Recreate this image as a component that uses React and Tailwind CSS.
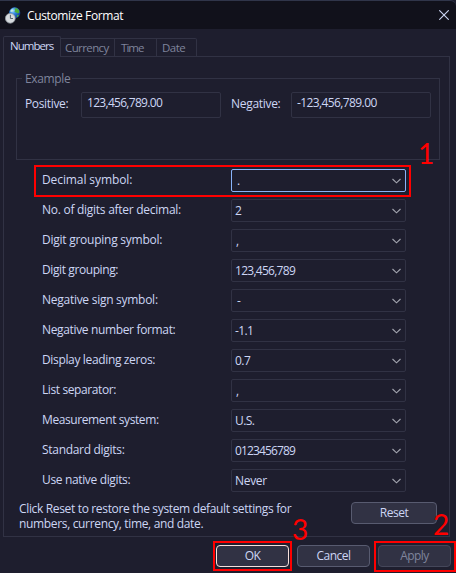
import React from 'react';

const rows = [
  ['Decimal symbol:', '.', 'pl-[5px]', 'tracking-[-0.1px]'],
  ['No. of digits after decimal:', '2', 'pl-[3px]', 'tracking-[-0.27px]'],
  ['Digit grouping symbol:', ',', 'pl-[4px]', 'tracking-[-0.25px]'],
  ['Digit grouping:', '123,456,789', 'pl-[3px] tracking-[-0.72px]', 'tracking-[-0.4px]'],
  ['Negative sign symbol:', '-', 'pl-[5px]', 'tracking-[-0.27px]'],
  ['Negative number format:', '-1.1', 'pl-[3px] tracking-[-0.6px]', 'tracking-[-0.35px]'],
  ['Display leading zeros:', '0.7', 'pl-[3px] tracking-[-0.5px]', 'tracking-[-0.35px]'],
  ['List separator:', ',', 'pl-[4px]', 'tracking-[-0.4px]'],
  ['Measurement system:', 'U.S.', 'pl-[3px] tracking-[-0.6px]', 'tracking-[-0.4px]'],
  ['Standard digits:', '0123456789', 'pl-[3px] tracking-[-0.85px]', 'tracking-[-0.3px]'],
  ['Use native digits:', 'Never', 'pl-[3px] tracking-[-0.3px]', 'tracking-[-0.35px]'],
];

function ClockGlobe() {
  return (
    <svg width="16" height="17" viewBox="0 0 16 17" className="ml-[5px] shrink-0">
      <defs>
        <radialGradient id="sea" cx="0.35" cy="0.3" r="0.75">
          <stop offset="0" stopColor="#a5dcff" />
          <stop offset="0.4" stopColor="#3186e0" />
          <stop offset="1" stopColor="#0e2f8a" />
        </radialGradient>
      </defs>
      <circle cx="9.7" cy="5.9" r="5.6" fill="url(#sea)" />
      <path d="M9.5 1.4 12 1.2l2 2 .4 2.4-1.6 1-1.5-1.2-1.8-.3.6-1.7zM12 8.2l2-.4-1 2-1.5.8z" fill="#4fb038" />
      <path d="M5 4.2 7 2l1.4 1.2L7 5z" fill="#c5ebe0" />
      <circle cx="5.3" cy="11.3" r="4.9" fill="#d6dade" stroke="#8f979e" strokeWidth="0.8" />
      <path d="M5.4 7.8v3.7H8" fill="none" stroke="#59636c" strokeWidth="1" />
    </svg>
  );
}

function Chevron() {
  return (
    <svg width="9" height="6" viewBox="0 0 9 6" className="mr-[4px] shrink-0">
      <path d="M.5 1 4.5 4.8 8.5 1" fill="none" stroke="#a3a5af" strokeWidth="1.1" />
    </svg>
  );
}

function Row({ label, value, look, tracking, active }) {
  return (
    <div className="flex h-[23px] items-center">
      <div className={`w-[189px] shrink-0 whitespace-pre pb-[2px] ${tracking}`}>{label}</div>
      <div className={`flex h-[23px] w-[175px] items-center justify-between rounded-[2px] border ${active ? 'border-[#89b4fa]' : 'border-[#313244]'} ${look}`}>
        <span className="pb-px">{value}</span>
        <Chevron />
      </div>
    </div>
  );
}

function Button({ children, look }) {
  return <div className={`flex items-center justify-center rounded-[4px] border bg-[#313244] pb-px ${look}`}>{children}</div>;
}

export default function App() {
  return (
    <div className="relative h-[573px] w-[456px] overflow-hidden bg-[#1e1e2e] font-['Open_Sans','Noto_Sans',sans-serif] text-[12px] leading-[15px] text-[#cdd6f4]">
      <div className="flex h-[29px] items-center rounded-tr-[6px] border-t border-[#30354a] bg-[#11111b]">
        <ClockGlobe />
        <span className="ml-[6px] text-[12px] tracking-[-0.37px] text-white">Customize Format</span>
        <svg width="10" height="10" viewBox="0 0 10 10" className="ml-auto mr-[7px]">
          <path d="M.3.3l9.4 9.4M9.7.3.3 9.7" stroke="#cdd6f4" strokeWidth="1.1" />
        </svg>
      </div>

      <div className="relative z-10 ml-[3px] mt-[7px] flex h-[21px] items-end">
        <div className="flex h-[21px] w-[58px] rounded-t-[2px] border border-b-0 border-[#313244] bg-[#1e1e2e] pl-[6px] pt-[1px] text-[11.5px] tracking-[-0.95px]">Numbers</div>
        <div className="flex h-[19px] w-[54px] border-y border-r border-[#313244] pl-[4px] pt-[1px] text-[11.5px] tracking-[-0.6px] text-[#7f849c]">Currency</div>
        <div className="flex h-[19px] w-[42px] border-y border-r border-[#313244] pl-[6px] pt-[1px] text-[11.5px] tracking-[-0.95px] text-[#7f849c]">Time</div>
        <div className="flex h-[19px] w-[40px] rounded-tr-[2px] border-y border-r border-[#313244] pl-[5px] pt-[1px] text-[11.5px] tracking-[-0.5px] text-[#7f849c]">Date</div>
      </div>

      <div className="-mt-px ml-[3px] h-[481px] w-[447px] border border-[#313244] pl-[12px] pt-[21px]">
        <div className="h-[82px] w-[424px] border border-[#313244]">
          <div className="ml-[5px] mt-[-8px] flex h-[15px] w-[50px] items-center bg-[#1e1e2e] pl-[3px] tracking-[-0.35px] text-[#7f849c]">Example</div>
          <div className="ml-[8px] mt-[6px] flex">
            <span className="mt-[4px] w-[56px] whitespace-nowrap tracking-[-0.35px]">Positive:</span>
            <div className="h-[26px] w-[140px] rounded-[2px] border border-[#313244] pl-[5px] pt-[2px] tracking-[-0.7px]">123,456,789.00</div>
            <span className="ml-[10px] mt-[4px] w-[60px] whitespace-nowrap tracking-[-0.3px]">Negative:</span>
            <div className="h-[26px] w-[140px] rounded-[2px] border border-[#313244] pl-[5px] pt-[2px] tracking-[-0.6px]">-123,456,789.00</div>
          </div>
        </div>

        <div className="ml-[26px] mt-[9px] flex flex-col gap-[7px]">
          {rows.map(([label, value, look, tracking], i) => (
            <Row key={label} label={label} value={value} look={look} tracking={tracking} active={i === 0} />
          ))}
        </div>

        <div className="ml-[3px] mt-[9px] flex">
          <p className="mr-[56px] w-[276px] whitespace-pre tracking-[-0.34px]">{'Click Reset to restore the system default settings for\nnumbers, currency, time, and date.'}</p>
          <Button look="mt-[1px] h-[22px] w-[86px] border-[#585b70] tracking-[-0.5px]">Reset</Button>
        </div>
      </div>

      <div className="ml-[216px] mt-[8px] flex">
        <Button look="h-[22px] w-[73px] border-[#f5e0dc] tracking-[-0.5px]">OK</Button>
        <Button look="ml-[8px] h-[22px] w-[73px] border-[#585b70] tracking-[-0.5px]">Cancel</Button>
        <Button look="ml-[8px] h-[22px] w-[73px] border-[#45475a] text-[#7f849c] tracking-[-0.6px]">Apply</Button>
      </div>

      <div className="absolute left-[34px] top-[165px] h-[32px] w-[377px] border-2 border-[#ff0000]" />
      <div className="absolute left-[213px] top-[541px] h-[30px] w-[79px] border-2 border-[#ff0000]" />
      <div className="absolute left-[374px] top-[541px] h-[31px] w-[82px] border-2 border-[#ff0000]" />
      <div className="absolute left-[418px] top-[139px] z-20 font-['Lato',sans-serif] text-[28px] leading-[28px] text-[#ff0000]">1</div>
      <div className="absolute left-[433px] top-[510px] z-20 font-['Lato',sans-serif] text-[28px] leading-[28px] text-[#ff0000]">2</div>
      <div className="absolute left-[292px] top-[515px] z-20 font-['Lato',sans-serif] text-[28px] leading-[28px] text-[#ff0000]">3</div>
    </div>
  );
}
